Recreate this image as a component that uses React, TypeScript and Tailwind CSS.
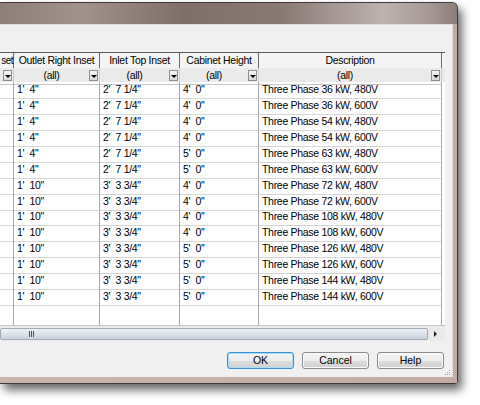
const FONT = "font-['Liberation_Sans',Arial,sans-serif]"

const COLS = 'grid-cols-[14px_86px_80px_79px_183px]'

type Row = { outlet: string; inlet: string; height: string; desc: string }

const SMALL = { outlet: `1'  4"`, inlet: `2'  7 1/4"` }
const LARGE = { outlet: `1'  10"`, inlet: `3'  3 3/4"` }

const ROWS: Row[] = [
  { ...SMALL, height: `4'  0"`, desc: 'Three Phase 36 kW, 480V' },
  { ...SMALL, height: `4'  0"`, desc: 'Three Phase 36 kW, 600V' },
  { ...SMALL, height: `4'  0"`, desc: 'Three Phase 54 kW, 480V' },
  { ...SMALL, height: `4'  0"`, desc: 'Three Phase 54 kW, 600V' },
  { ...SMALL, height: `5'  0"`, desc: 'Three Phase 63 kW, 480V' },
  { ...SMALL, height: `5'  0"`, desc: 'Three Phase 63 kW, 600V' },
  { ...LARGE, height: `4'  0"`, desc: 'Three Phase 72 kW, 480V' },
  { ...LARGE, height: `4'  0"`, desc: 'Three Phase 72 kW, 600V' },
  { ...LARGE, height: `4'  0"`, desc: 'Three Phase 108 kW, 480V' },
  { ...LARGE, height: `4'  0"`, desc: 'Three Phase 108 kW, 600V' },
  { ...LARGE, height: `5'  0"`, desc: 'Three Phase 126 kW, 480V' },
  { ...LARGE, height: `5'  0"`, desc: 'Three Phase 126 kW, 600V' },
  { ...LARGE, height: `5'  0"`, desc: 'Three Phase 144 kW, 480V' },
  { ...LARGE, height: `5'  0"`, desc: 'Three Phase 144 kW, 600V' },
]

const HEADERS = ['Outlet Right Inset', 'Inlet Top Inset', 'Cabinet Height', 'Description']

function DropBtn() {
  return (
    <span className="flex h-[11px] w-[9px] shrink-0 items-center justify-center border border-[#8f8f8f] bg-gradient-to-b from-[#f6f6f6] to-[#d9d9d9]">
      <span className="mt-[1px] border-x-[3px] border-t-[3px] border-x-transparent border-t-black" />
    </span>
  )
}

function Btn({ label, primary }: { label: string; primary?: boolean }) {
  return (
    <button
      className={`flex h-[17px] w-[67px] items-center justify-center rounded-[3px] border text-[10.5px] text-black bg-[linear-gradient(#f4f4f4_0%,#ececec_50%,#dedede_51%,#d0d0d0_100%)] ${
        primary
          ? 'border-[#3c8fd0] shadow-[inset_0_0_0_1px_#a8dcf4]'
          : 'border-[#8a8a8a] shadow-[inset_0_0_0_1px_#fbfbfb]'
      }`}
    >
      {label}
    </button>
  )
}

function Grid() {
  return (
    <div className={`flex h-[289px] w-[445px] flex-col bg-white text-[10.5px] tracking-[-0.3px] text-black ${FONT}`}>
      {/* header */}
      <div className={`grid ${COLS} h-[16px] border-t border-[#5a5a5a] bg-[#f4f4f4]`}>
        <div className="flex items-center justify-end whitespace-nowrap border-r border-b border-r-[#6a6a6a] border-b-[#9a9a9a] text-[10px] tracking-[-0.5px]">
          set
        </div>
        {HEADERS.map((h) => (
          <div
            key={h}
            className="flex items-center justify-center whitespace-nowrap border-r border-b border-r-[#6a6a6a] border-b-[#9a9a9a]"
          >
            {h}
          </div>
        ))}
      </div>

      {/* filter row */}
      <div className={`grid ${COLS} h-[14px] bg-[#eaeaea]`}>
        <div className="flex items-center justify-end border-r border-b border-r-[#d0d0d0] border-b-[#c8c8c8] pr-[1px]">
          <DropBtn />
        </div>
        {HEADERS.map((h) => (
          <div
            key={h}
            className="flex items-center border-r border-b border-r-[#d0d0d0] border-b-[#c8c8c8] pr-[1px]"
          >
            <span className="flex-1 text-center">(all)</span>
            <DropBtn />
          </div>
        ))}
      </div>

      {/* data rows */}
      {ROWS.map((r, i) => (
        <div key={i} className={`grid ${COLS} ${i === 7 || i === 13 ? 'h-[15px]' : 'h-[16px]'}`}>
          <div className="border-r border-b border-r-[#a8a8a8] border-b-[#d6d6d6]" />
          {[r.outlet, r.inlet, r.height, r.desc].map((v, j) => (
            <div
              key={j}
              className="flex items-center whitespace-pre border-r border-b border-r-[#a8a8a8] border-b-[#d6d6d6] pl-[3px]"
            >
              {v}
            </div>
          ))}
        </div>
      ))}

      {/* empty area below rows */}
      <div className={`grid ${COLS} flex-1`}>
        {[0, 1, 2, 3, 4].map((k) => (
          <div key={k} className="border-r border-[#a8a8a8]" />
        ))}
      </div>

      {/* horizontal scrollbar */}
      <div className="flex h-[16px] border-t border-[#c4c4c4] bg-[#eaeaea] pt-[2px] pb-[1px] pr-[2px]">
        <div className="flex flex-1 items-center rounded-[2px] border border-[#a3adb8] bg-gradient-to-b from-[#eef2f6] to-[#c9d3dd] pl-[28px]">
          <span className="flex h-[6px] gap-[1px]">
            <span className="w-[1px] bg-[#4a5560]" />
            <span className="w-[1px] bg-[#4a5560]" />
            <span className="w-[1px] bg-[#4a5560]" />
          </span>
        </div>
        <div className="flex w-[15px] items-center justify-center">
          <span className="border-y-[3px] border-l-[3px] border-y-transparent border-l-[#222]" />
        </div>
      </div>
    </div>
  )
}

export default function App() {
  return (
    <div className="h-[405px] w-[480px] overflow-hidden bg-white pt-[2px]">
      <div className="flex h-[382px] w-[458px] flex-col rounded-tr-[6px] rounded-br-[4px] border-y border-r border-[#3e3a3a] bg-[#c7b3ab] shadow-[4px_6px_10px_rgba(0,0,0,0.6)]">
        <div className="h-[21px] rounded-tr-[5px] bg-[linear-gradient(90deg,#8e7e7a_0%,#a2928e_18%,#7f6e6a_40%,#8a7a76_62%,#bfb3af_84%,#a69894_94%,#8c7d79_100%)]" />
        <div className="flex flex-1 pr-[4px] pb-[6px] bg-[linear-gradient(90deg,#c9b6ae_0%,#c2aca4_100%)]">
          <div className="relative flex flex-1 flex-col border-t border-r border-[#e2dcd8] bg-[#f0f0f0] pt-[27px]">
            <Grid />
            <div className={`mt-[11px] flex justify-end gap-[8px] pr-[8px] ${FONT}`}>
              <Btn label="OK" primary />
              <Btn label="Cancel" />
              <Btn label="Help" />
            </div>
            <svg className="absolute right-[1px] bottom-[1px]" width="7" height="7" viewBox="0 0 7 7">
              <rect x="5" y="1" width="1" height="1" fill="#9a9a9a" />
              <rect x="3" y="3" width="1" height="1" fill="#9a9a9a" />
              <rect x="5" y="3" width="1" height="1" fill="#9a9a9a" />
              <rect x="1" y="5" width="1" height="1" fill="#9a9a9a" />
              <rect x="3" y="5" width="1" height="1" fill="#9a9a9a" />
              <rect x="5" y="5" width="1" height="1" fill="#9a9a9a" />
            </svg>
          </div>
        </div>
      </div>
    </div>
  )
}
